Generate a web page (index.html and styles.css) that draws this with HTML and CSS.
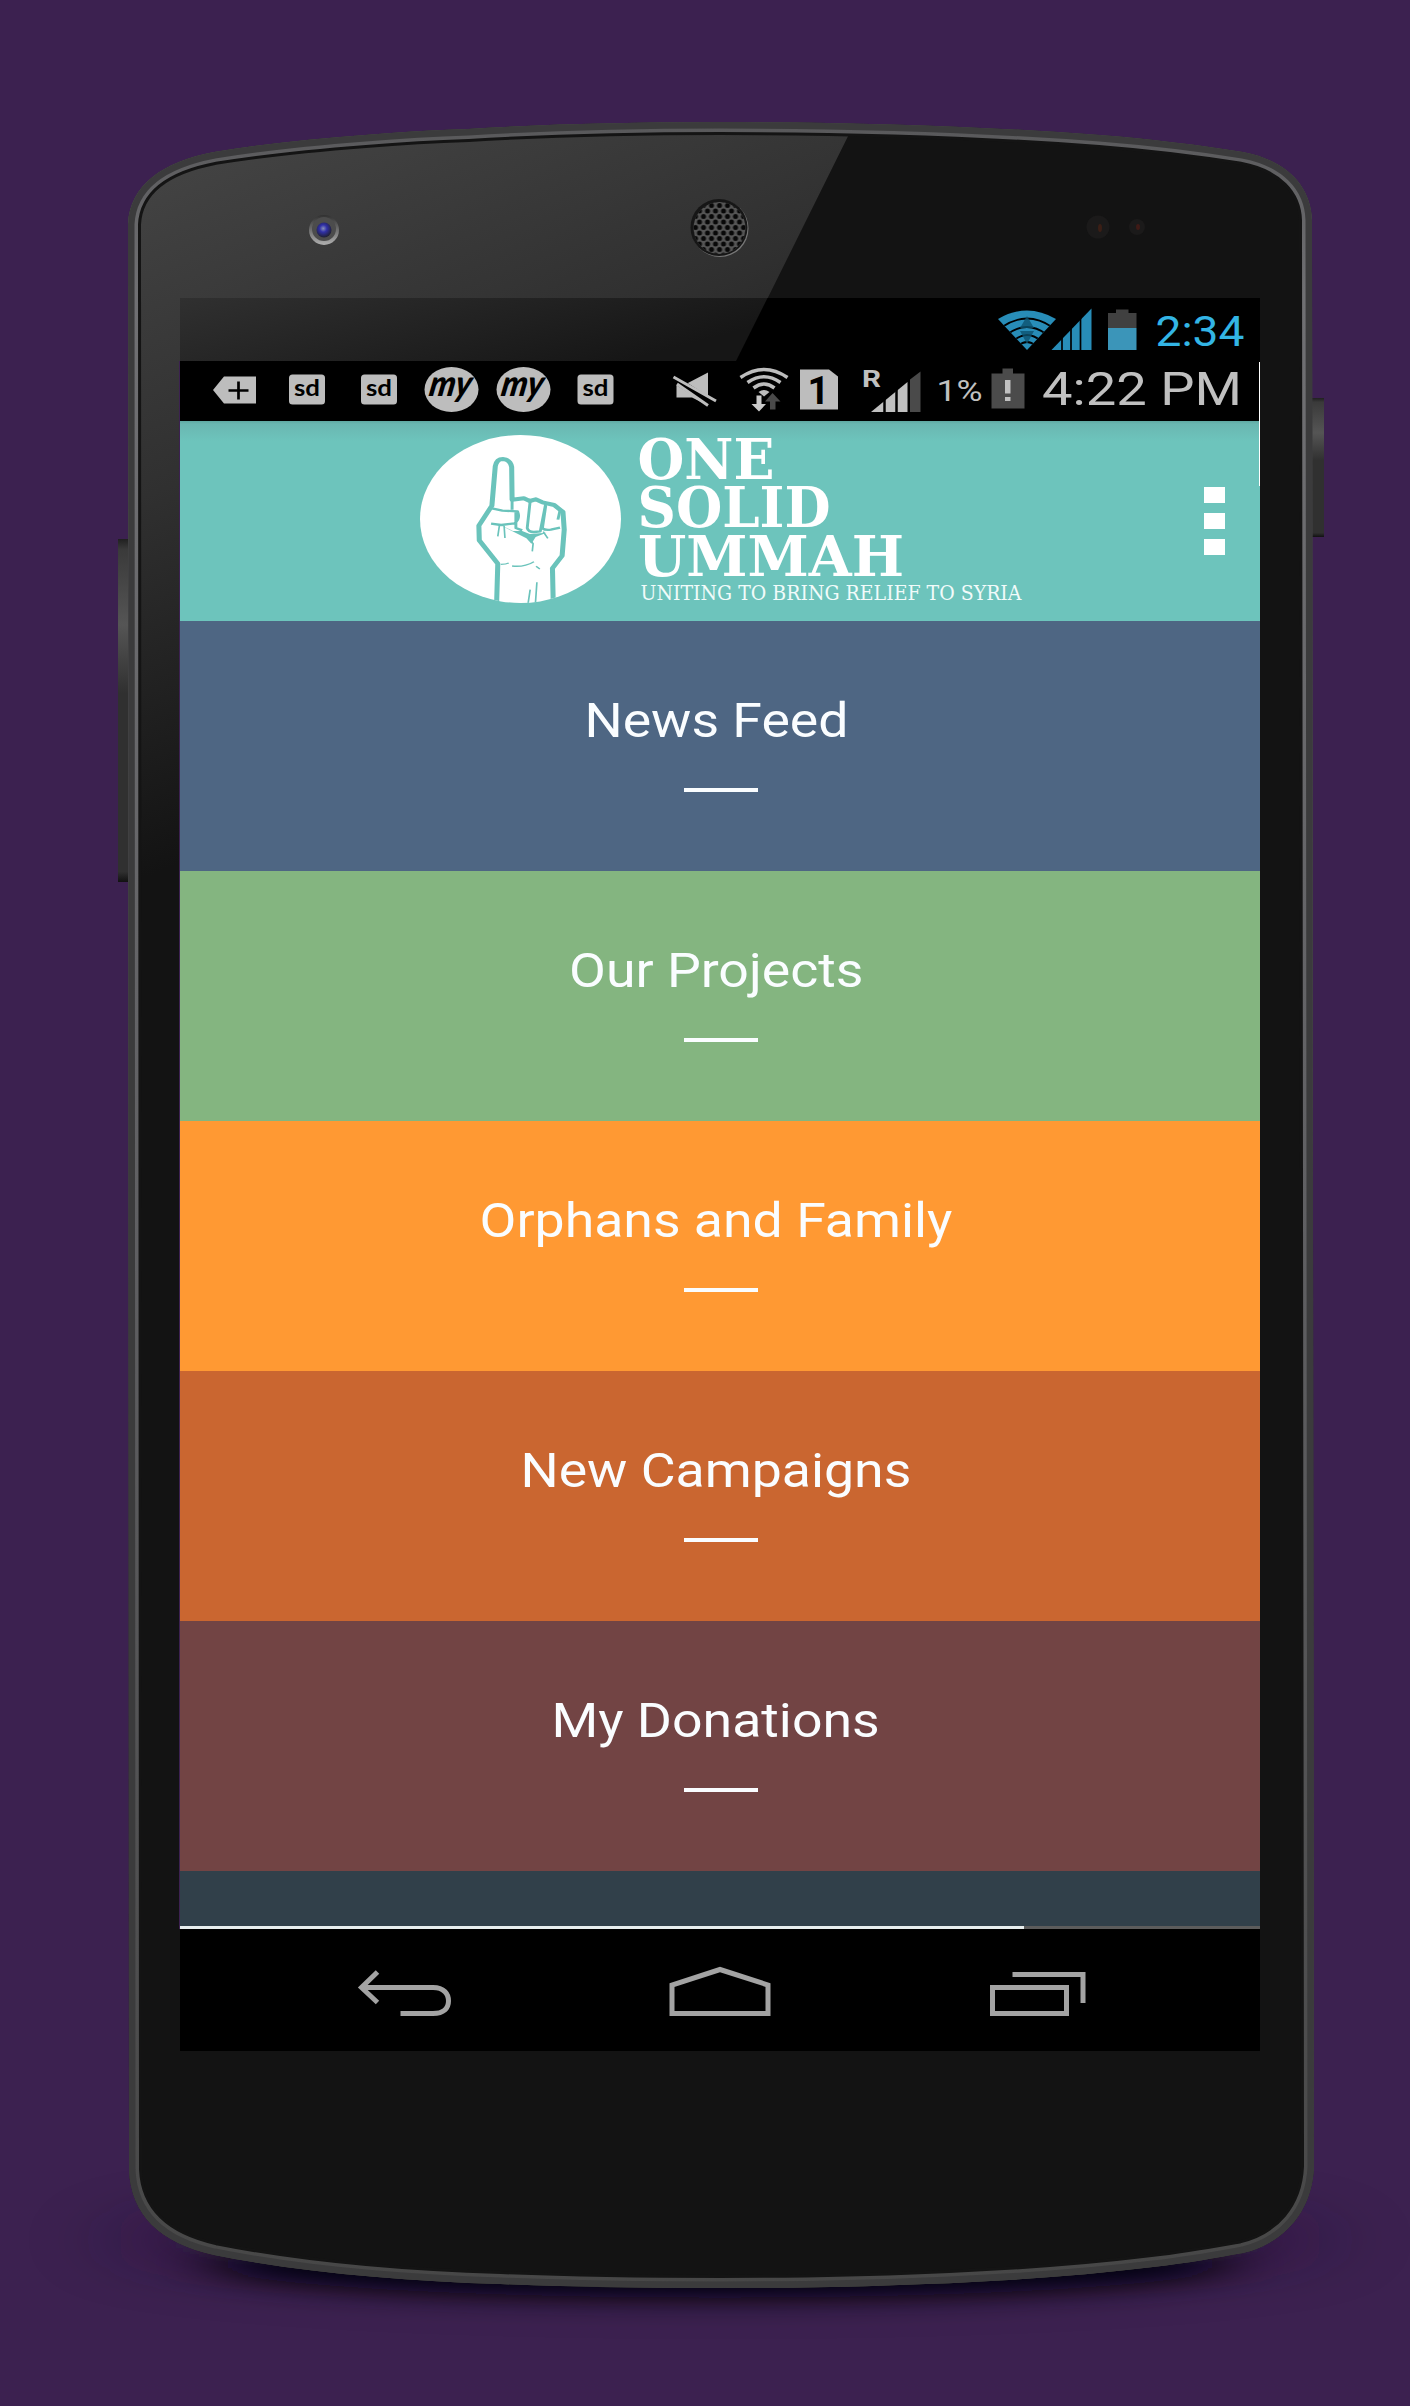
FILE: index.html
```html
<!DOCTYPE html>
<html lang="en">
<head>
    <meta charset="UTF-8">
    <meta name="viewport" content="width=device-width, initial-scale=1.0">
    <title>One Solid Ummah</title>
    <link rel="stylesheet" href="styles.css">
</head>
<body>
    <div class="stage">
        <!-- Phone body -->
        <svg class="phone" viewBox="0 0 1410 2406" aria-hidden="true">
            <defs>
                <path id="body" d="M128 224 C130 185 162 162 214 152 C262 144 314 139 365 135 C400 132 433 130 468 129 C550 124 634 122 720 122 C850 122 980 126 1100 135 C1150 139 1200 145 1243 152 C1286 160 1311 186 1312 220 L1314 2167 C1312 2212 1284 2243 1243 2253 C1215 2258 1188 2263 1153 2267 C1080 2276 1005 2281 926 2284 C860 2287 790 2288 720 2288 C645 2288 570 2287 500 2284 C400 2281 300 2272 214 2255 C160 2243 131 2215 129 2170 Z"/>
                <clipPath id="bodyClip"><use href="#body"/></clipPath>
                <linearGradient id="bezelLight" gradientUnits="userSpaceOnUse" x1="300" y1="130" x2="560" y2="790">
                    <stop offset="0" stop-color="#424242"/>
                    <stop offset="0.4" stop-color="#303030"/>
                    <stop offset="0.9" stop-color="#131313"/>
                </linearGradient>
                <linearGradient id="edge" x1="0" y1="0" x2="0" y2="1">
                    <stop offset="0" stop-color="#58585a"/>
                    <stop offset="0.08" stop-color="#707073"/>
                    <stop offset="0.5" stop-color="#606063"/>
                    <stop offset="1" stop-color="#474747"/>
                </linearGradient>
                <linearGradient id="button" x1="0" y1="0" x2="0" y2="1">
                    <stop offset="0" stop-color="#202020"/>
                    <stop offset="0.03" stop-color="#3a3a3a"/>
                    <stop offset="0.25" stop-color="#555555"/>
                    <stop offset="0.45" stop-color="#303030"/>
                    <stop offset="0.97" stop-color="#303030"/>
                    <stop offset="1" stop-color="#111111"/>
                </linearGradient>
                <radialGradient id="lens" cx="0.45" cy="0.4" r="0.6">
                    <stop offset="0" stop-color="#8890b8"/>
                    <stop offset="0.4" stop-color="#3030a8"/>
                    <stop offset="1" stop-color="#202030"/>
                </radialGradient>
                <linearGradient id="lensRing" x1="0" y1="0" x2="0" y2="1">
                    <stop offset="0" stop-color="#303030"/>
                    <stop offset="1" stop-color="#b0b0b0"/>
                </linearGradient>
                <pattern id="holes" width="8" height="11" patternUnits="userSpaceOnUse" x="715.5" y="222">
                    <circle cx="4" cy="5.5" r="2.5" fill="#080808"/>
                    <circle cx="0" cy="0" r="2.5" fill="#080808"/>
                    <circle cx="8" cy="0" r="2.5" fill="#080808"/>
                    <circle cx="0" cy="11" r="2.5" fill="#080808"/>
                    <circle cx="8" cy="11" r="2.5" fill="#080808"/>
                </pattern>
                <filter id="soft" x="-30%" y="-100%" width="160%" height="300%">
                    <feGaussianBlur stdDeviation="34 13"/>
                </filter>
                <filter id="softWide" x="-30%" y="-100%" width="160%" height="300%">
                    <feGaussianBlur stdDeviation="50 26"/>
                </filter>
            </defs>

            <ellipse cx="720" cy="2240" rx="600" ry="42" fill="#1d0a2b" opacity="0.5" filter="url(#softWide)"/>
            <ellipse cx="720" cy="2264" rx="510" ry="34" fill="#050008" filter="url(#soft)"/>

            <rect x="118" y="539" width="12" height="343" fill="url(#button)"/>
            <rect x="1312" y="398" width="12" height="139" fill="url(#button)"/>

            <g clip-path="url(#bodyClip)">
                <use href="#body" fill="#131313"/>
                <path d="M120 110 H861 L608 620 L500 900 H120 Z" fill="url(#bezelLight)"/>
                <use href="#body" fill="none" stroke="#141414" stroke-width="26"/>
                <use href="#body" fill="none" stroke="url(#edge)" stroke-width="20"/>
                <use href="#body" fill="none" stroke="#3b3b3c" stroke-width="13"/>
            </g>

            <circle cx="324" cy="230" r="15" fill="url(#lensRing)"/>
            <circle cx="324" cy="229" r="12" fill="#4c4c4c"/>
            <circle cx="324" cy="230" r="7.5" fill="url(#lens)"/>

            <circle cx="720" cy="228.5" r="28.5" fill="#777777"/>
            <circle cx="719" cy="227.5" r="28.5" fill="#161616"/>
            <circle cx="719.5" cy="228" r="26" fill="#555555"/>
            <circle cx="719.5" cy="228" r="26" fill="url(#holes)"/>

            <circle cx="1098" cy="227" r="11.5" fill="#1b1a1a"/>
            <ellipse cx="1100" cy="228" rx="2" ry="4" fill="#3b1f16"/>
            <circle cx="1137" cy="227" r="8" fill="#1b1a1a"/>
            <ellipse cx="1138" cy="227" rx="2" ry="3" fill="#3f1a16"/>
        </svg>

        <div class="screen">
            <!-- Device status bar -->
            <svg class="device-status" viewBox="180 298 1080 63">
                <defs>
                    <linearGradient id="glare" x1="0" y1="0" x2="1" y2="0.4">
                        <stop offset="0" stop-color="#303030"/>
                        <stop offset="1" stop-color="#161616"/>
                    </linearGradient>
                    <clipPath id="fan"><path d="M1027 350 L998 319 Q1027 302 1056 319 Z"/></clipPath>
                </defs>
                <path d="M180 298 H767.5 L736 361 H180 Z" fill="url(#glare)"/>
                <g clip-path="url(#fan)">
                    <rect x="998" y="308" width="58" height="44" fill="#288db8"/>
                    <g fill="none" stroke="#000" stroke-width="1.8">
                        <path d="M1002 327 Q1027 310 1052 327"/>
                        <path d="M1008 334 Q1027 320 1046 334"/>
                        <path d="M1013 341 Q1027 329 1041 341"/>
                        <path d="M1018 346 Q1027 338 1036 346"/>
                    </g>
                    <path d="M1027 316 l7 12 h-14 Z M1027 344 l7 -13 h-14 Z" fill="#0c526f" opacity="0.8"/>
                </g>
                <path d="M1051.5 350 L1091.5 308.5 V350 Z" fill="#288db8"/>
                <path d="M1062 337 V351 M1071 328 V351 M1080.5 318 V351" stroke="#000" stroke-width="1.7"/>
                <path d="M1108 313 H1116 V309.5 H1128.5 V313 H1136.5 V328 H1108 Z" fill="#404040"/>
                <rect x="1108" y="328" width="28.5" height="22" fill="#3b95b9"/>
                <text x="1155.5" y="346" textLength="89" lengthAdjust="spacingAndGlyphs" class="device-clock">2:34</text>
            </svg>

            <div class="app">
                <!-- Status bar of the app -->
                <svg class="status" viewBox="180 361 1080 60">
                    <path d="M213 390 L224 376.5 H256 V403.5 H224 Z" fill="#bdbdbd"/>
                    <path d="M228.5 390.5 H248.5 M238.5 381.5 V399.5" stroke="#000" stroke-width="2.7"/>

                    <g fill="#bdbdbd">
                        <rect x="289" y="374.5" width="36" height="30" rx="3.5"/>
                        <rect x="361" y="374.5" width="36" height="30" rx="3.5"/>
                        <rect x="577.5" y="374.5" width="36" height="30" rx="3.5"/>
                        <ellipse cx="451.5" cy="389.5" rx="27" ry="22.5"/>
                        <ellipse cx="523.5" cy="389.5" rx="27" ry="22.5"/>
                    </g>
                    <g class="sd">
                        <text x="294" y="396" textLength="26" lengthAdjust="spacingAndGlyphs">sd</text>
                        <text x="366" y="396" textLength="26" lengthAdjust="spacingAndGlyphs">sd</text>
                        <text x="582.5" y="396" textLength="26" lengthAdjust="spacingAndGlyphs">sd</text>
                    </g>
                    <g class="my">
                        <text transform="translate(428 396) skewX(-10)" textLength="42" lengthAdjust="spacingAndGlyphs">my</text>
                        <text transform="translate(500 396) skewX(-10)" textLength="42" lengthAdjust="spacingAndGlyphs">my</text>
                    </g>

                    <!-- muted -->
                    <path d="M676.5 384 L686 384 L708 372.5 V405.5 L692 397.5 H676.5 Z" fill="#bdbdbd"/>
                    <path d="M674 379 L713 404" stroke="#000" stroke-width="8"/>
                    <path d="M673.5 377 L716 401 M677 384 L708 405.5" stroke="#bdbdbd" stroke-width="3"/>

                    <!-- wifi -->
                    <g fill="none" stroke="#bdbdbd" stroke-width="3.5">
                        <path d="M740.5 377.5 Q764 361.5 787.5 377.5"/>
                        <path d="M747.5 382.5 Q764 371 780.5 382.5"/>
                        <path d="M753.5 388 Q764 380 774.5 388"/>
                    </g>
                    <path d="M758.5 392 Q764 388 769.5 392 L764 396.5 Z" fill="#bdbdbd"/>
                    <path d="M756.5 395.5 H761.5 V404 H766 L759 411.5 L751.5 404 H756.5 Z" fill="#cacaca"/>
                    <path d="M772.5 393 L780.5 401.5 H775.5 V409.5 H770 V401.5 H765 Z" fill="#4a4a4a"/>

                    <!-- sim -->
                    <path d="M800 369.5 H829 L838 376.5 V409.5 H800 Z" fill="#bdbdbd"/>
                    <text x="807.5" y="403.5" class="sim" textLength="22" lengthAdjust="spacingAndGlyphs">1</text>

                    <!-- signal -->
                    <text x="862" y="387" class="roaming" textLength="19" lengthAdjust="spacingAndGlyphs">R</text>
                    <path d="M871 412 L907.5 382 V412 Z" fill="#c0c0c0"/>
                    <path d="M910 379.5 L920.5 371.5 V412 H910 Z" fill="#4a4a4a"/>
                    <path d="M884.5 396 V412 M896.5 386 V412" stroke="#000" stroke-width="2.5"/>

                    <text x="936.5" y="401" class="percent" textLength="46" lengthAdjust="spacingAndGlyphs">1%</text>
                    <path d="M991.5 373.5 H1002.5 V368.5 H1013 V373.5 H1024.5 V408.5 H991.5 Z" fill="#4b4b4b"/>
                    <path d="M1005 380 H1010.5 V393.5 H1005 Z M1005 397 H1010.5 V401 H1005 Z" fill="#c0c0c0"/>
                    <text x="1042" y="404.5" class="clock" textLength="200" lengthAdjust="spacingAndGlyphs">4:22 PM</text>
                </svg>

                <header class="header">
                    <div class="logo">
                        <svg class="hand" viewBox="47 46 478 504" preserveAspectRatio="none">
                            <clipPath id="disc"><ellipse cx="286" cy="298" rx="239" ry="252"/></clipPath>
                            <ellipse cx="286" cy="298" rx="239" ry="252" fill="#fff"/>
                            <g clip-path="url(#disc)" fill="none" stroke="#6ac3bb" stroke-linejoin="round">
                                <path stroke-width="12" d="M229 560 L232 432 L188 362 L187 318 L218 258 L226 140 Q229 118 244 118 Q262 120 265 142 L266 240 L294 236 L308 244 L322 239 L338 248 L366 256 L387 277 L390 330 L385 408 L362 446 L364 560"/>
                                <path stroke-width="7" d="M266 238 L266 270 M218 266 L243 273 L279 275 Q286 298 272 311 L240 316 L216 312 M309 244 L302 325 Q304 337 318 337 L333 335 L346 252 M346 258 L338 326 Q344 332 358 330 L380 324 M380 272 L375 300 M275 276 L275 325 L290 332"/>
                                <path stroke-width="4" d="M236 316 L232 350 M247 318 L249 355 M340 336 L351 356 M308 358 L316 372 L314 395 M239 434 Q252 434 258 430 M266 439 Q295 443 318 426 M323 440 L332 448 M325 488 L321 560 M309 510 L303 560"/>
                                <path d="M232 312 L268 334 L290 334 L308 343 L348 339 L322 352 L312 372 L300 356 Z" fill="#6ac3bb" stroke="none"/>
                            </g>
                        </svg>
                        <svg class="wordmark" viewBox="636 430 392 176">
                            <g class="wordmark-title">
                                <text x="637.5" y="479" textLength="137" lengthAdjust="spacingAndGlyphs">ONE</text>
                                <text x="637.5" y="527" textLength="193" lengthAdjust="spacingAndGlyphs">SOLID</text>
                                <text x="638" y="575.5" textLength="266" lengthAdjust="spacingAndGlyphs">UMMAH</text>
                            </g>
                            <text x="640.5" y="600" class="wordmark-tagline" textLength="381" lengthAdjust="spacingAndGlyphs">UNITING TO BRING RELIEF TO SYRIA</text>
                        </svg>
                    </div>
                    <div class="menu-button">
                        <span></span>
                        <span></span>
                        <span></span>
                    </div>
                </header>

                <nav class="menu">
                    <a class="item news"><span class="label">News Feed</span></a>
                    <a class="item projects"><span class="label">Our Projects</span></a>
                    <a class="item orphans"><span class="label">Orphans and Family</span></a>
                    <a class="item campaigns"><span class="label">New Campaigns</span></a>
                    <a class="item donations"><span class="label">My Donations</span></a>
                    <a class="item next"></a>
                </nav>
                <div class="progress"></div>
            </div>

            <!-- Android navigation keys -->
            <svg class="softkeys" viewBox="180 1929 1080 122">
                <g fill="none" stroke="#a3a3a3" stroke-width="5">
                    <path d="M377.5 1972 L361.5 1987.5 L377.5 2002.5"/>
                    <path d="M364 1987.5 H433 C444 1987.5 448.5 1994 448.5 2001 C448.5 2008 444 2013.5 433 2013.5 H400.500"/>
                    <path d="M672 2013.5 V1985 L720 1969.5 L768 1985 V2013.5 Z"/>
                    <path d="M992.5 1987.5 H1066.5 V2013.5 H992.5 Z"/>
                    <path d="M1012.5 1974.5 H1083 V2003"/>
                </g>
            </svg>
        </div>
    </div>
</body>
</html>
```
FILE: styles.css
```css
* {
    margin: 0;
    padding: 0;
    box-sizing: border-box;
}

body {
    font-family: Roboto, "Liberation Sans", sans-serif;
    background: #3c2150;
}

.stage {
    position: relative;
    width: 1410px;
    height: 2406px;
    padding: 298px 150px 0 180px;
    overflow: hidden;
}

/* the handset is drawn behind the screen */
.phone {
    position: absolute;
    top: 0;
    left: 0;
    width: 1410px;
    height: 2406px;
}

.screen {
    position: relative;
    display: flex;
    flex-direction: column;
    width: 1080px;
    height: 1753px;
    background: #000;
}

.screen > * {
    flex-shrink: 0;
}

.device-status {
    display: block;
    width: 1080px;
    height: 63px;
}

.device-clock {
    font-size: 42px;
    fill: #33b5e5;
}

.app {
    position: relative;
    width: 1081px;
    margin-left: -1px;
    border-left: 1px solid #3c2150;
}

.app::after {
    content: "";
    position: absolute;
    top: 1px;
    right: 0;
    width: 1px;
    height: 124px;
    background: #fff;
}

.status {
    display: block;
    width: 1080px;
    height: 60px;
    background: #000;
    overflow: visible;
}

.sd {
    font: bold 23px Lato, sans-serif;
    fill: #000;
}

.my {
    font: italic 900 36px Lato, sans-serif;
    fill: #000;
}

.sim {
    font: bold 38px Roboto, sans-serif;
    fill: #000;
}

.roaming {
    font-size: 24px;
    font-weight: bold;
    fill: #c0c0c0;
}

.percent {
    font-size: 29.5px;
    fill: #c0c0c0;
}

.clock {
    font-size: 46px;
    fill: #c0c0c0;
}

.header {
    position: relative;
    display: flex;
    justify-content: space-between;
    height: 200px;
    padding: 9px 35px 0 240px;
    background: linear-gradient(#5fa9a2 0, #6ab7b1 3px, #6dc4bc 20px);
}

.logo {
    display: flex;
}

.hand {
    width: 201px;
    height: 168px;
    margin-top: 5px;
}

.wordmark {
    width: 392px;
    height: 176px;
    margin-left: 15px;
    overflow: visible;
}

.wordmark-title {
    font: bold 56px "DejaVu Serif", serif;
    fill: #fff;
}

.wordmark-tagline {
    font: 19.5px "DejaVu Serif", serif;
    fill: #f1fbfa;
}

.menu-button {
    display: flex;
    flex-direction: column;
    gap: 10px;
    padding-top: 57px;
}

.menu-button span {
    width: 21px;
    height: 16px;
    background: #fff;
}

.item {
    display: flex;
    flex-direction: column;
    align-items: center;
    height: 250px;
    padding-top: 71px;
}

.label {
    font-size: 48.5px;
    line-height: 57px;
    color: #fafdff;
    white-space: nowrap;
    transform: scaleX(1.105);
    margin-right: 8px;
}

.item::after {
    content: "";
    width: 74px;
    height: 4px;
    margin: 39px 0 0 2px;
    background: #fafdff;
}

.news {
    background: #4e6683;
}

.projects {
    background: #84b580;
}

.orphans {
    background: #ff9933;
}

.campaigns {
    background: #ca6630;
}

.donations {
    background: #724444;
}

.next {
    height: 55px;
    padding-top: 0;
    background: #31404a;
}

.next::after {
    display: none;
}

.progress {
    height: 3px;
    background: linear-gradient(90deg, #e8eeee 844px, #5c5c5c 844px);
}

.softkeys {
    display: block;
    width: 1080px;
    height: 122px;
}
```
